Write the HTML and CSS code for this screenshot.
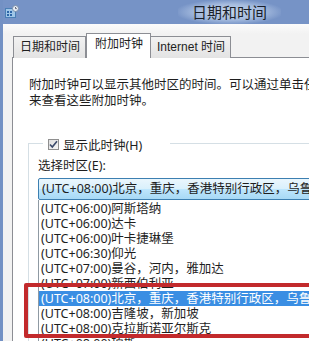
FILE: index.html
```html
<!DOCTYPE html>
<html>
<head lang="zh">
    <meta charset="UTF-8">
    <title>日期和时间</title>
    <link rel="stylesheet" href="styles.css">
</head>
<body>
<div class="window">
    <div class="titleBar">
        <svg class="appIcon" width="14" height="13" viewBox="0 0 14 13">
            <rect x="0.5" y="3.5" width="10" height="9" fill="#9fc6e8" stroke="#4b7fb5"/>
            <rect x="2" y="6" width="2" height="2" fill="#2d66a8"/>
            <rect x="5" y="6" width="2" height="2" fill="#2d66a8"/>
            <rect x="2" y="9" width="2" height="2" fill="#2d66a8"/>
            <rect x="5" y="9" width="2" height="2" fill="#2d66a8"/>
            <circle cx="10.5" cy="3.5" r="3" fill="#e8eef6" stroke="#7a8ea8"/>
            <path d="M10.5 2v1.6h1.3" stroke="#445" fill="none" stroke-width="0.8"/>
        </svg>
        <span class="title">日期和时间</span>
    </div>
    <div class="body">
        <ul class="tabGroup">
            <li class="tab">日期和时间</li>
            <li class="tab selectedTab">附加时钟</li>
            <li class="tab">Internet 时间</li>
        </ul>
        <div class="panel">
            <p class="intro">附加时钟可以显示其他时区的时间。可以通过单击任务栏时钟或悬停在其上<br>来查看这些附加时钟。</p>
            <div class="group">
                <label class="legend">
                    <span class="checkBox">
                        <svg width="9" height="9" viewBox="0 0 9 9">
                            <path d="M1 4.5l2.3 2.6L8 1.2" stroke="#3b4a6b" stroke-width="1.6" fill="none"/>
                        </svg>
                    </span>
                    显示此时钟(H)
                </label>
                <div class="groupBody">
                    <div class="fieldLabel">选择时区(E):</div>
                    <div class="comboBox">(UTC+08:00)北京，重庆，香港特别行政区，乌鲁木齐</div>
                    <ul class="dropList">
                        <li>(UTC+06:00)阿斯塔纳</li>
                        <li>(UTC+06:00)达卡</li>
                        <li>(UTC+06:00)叶卡捷琳堡</li>
                        <li>(UTC+06:30)仰光</li>
                        <li>(UTC+07:00)曼谷，河内，雅加达</li>
                        <li>(UTC+07:00)新西伯利亚</li>
                        <li class="selected">(UTC+08:00)北京，重庆，香港特别行政区，乌鲁木齐</li>
                        <li>(UTC+08:00)吉隆坡，新加坡</li>
                        <li>(UTC+08:00)克拉斯诺亚尔斯克</li>
                        <li>(UTC+08:00)珀斯</li>
                    </ul>
                </div>
            </div>
        </div>
    </div>
    <div class="redMark"></div>
</div>
</body>
</html>
```

FILE: styles.css
```css
*{
    margin: 0;
    padding: 0;
    box-sizing: border-box;
}
html,body{
    width: 309px;
    height: 341px;
    overflow: hidden;
}
body{
    font-family: "Noto Sans", "Noto Sans CJK SC", sans-serif;
    font-size: 12.5px;
    color: #1e1e1e;
    background: #f0f0f0;
}
.window{
    position: relative;
    height: 341px;
    border-left: 3px solid #7391c4;
    display: flex;
    flex-direction: column;
}
.titleBar{
    height: 24px;
    flex: none;
    display: flex;
    align-items: center;
    background: #7693c6;
    padding-left: 2px;
}
.appIcon{
    margin-top: -2px;
}
.title{
    margin-left: 159px;
    padding: 0 14px;
    font-size: 15px;
    line-height: 24px;
    white-space: nowrap;
    color: #1a1f2a;
    background: radial-gradient(ellipse at center, #c4d3ea 0%, #a6bcdf 45%, rgba(118,147,198,0) 75%);
}
.body{
    flex: 1;
    display: flex;
    flex-direction: column;
    background: linear-gradient(#fbfbfb, #f2f2f2 10px);
    padding-left: 9px;
}
ul{
    list-style: none;
}
.tabGroup{
    display: flex;
    align-items: flex-end;
    height: 34px;
    padding-left: 1px;
    position: relative;
    z-index: 1;
    margin-bottom: -1px;
}
.tabGroup .tab{
    height: 22px;
    line-height: 20px;
    padding: 0 5px 0 6px;
    font-family: "Liberation Sans", "Noto Sans CJK SC", sans-serif;
    font-size: 12px;
    background: linear-gradient(#f2f2f2, #e3e3e3);
    border: 1px solid #8c8e94;
    border-bottom: none;
    white-space: nowrap;
}
.tabGroup .tab + .tab{
    margin-left: -1px;
}
.tabGroup .tab.selectedTab{
    height: 25px;
    line-height: 20px;
    padding: 0 7px 0 8px;
    margin-left: 0;
    background: #fff;
}
.tabGroup .selectedTab + .tab{
    margin-left: 0;
    border-left: none;
}
.panel{
    flex: 1;
    background: #fff;
    border-top: 1px solid #8c8e94;
    border-left: 1px solid #8c8e94;
    padding: 19px 0 0 16px;
    overflow: hidden;
}
.intro{
    line-height: 16px;
    white-space: nowrap;
}
.group{
    margin-top: 34px;
    margin-left: -1px;
    border-top: 1px solid #d5dfe5;
    border-left: 1px solid #d5dfe5;
    padding-left: 9px;
}
.legend{
    display: flex;
    align-items: center;
    gap: 4px;
    width: 127px;
    height: 16px;
    margin: -8px 0 0 5px;
    padding-left: 5px;
    background: #fff;
}
.checkBox{
    width: 11px;
    height: 11px;
    border: 1px solid #8f8f8f;
    background: linear-gradient(135deg, #dedede, #f7f7f7);
    display: flex;
    align-items: center;
    justify-content: center;
}
.groupBody{
    padding-top: 6px;
}
.fieldLabel{
    line-height: 16px;
}
.comboBox{
    margin-top: 4px;
    height: 22px;
    width: 300px;
    line-height: 19px;
    padding-left: 3px;
    white-space: nowrap;
    overflow: hidden;
    border: 1px solid #3c7fb1;
    border-radius: 2px;
    background: linear-gradient(#eaf6fd, #d9f0fc 50%, #bee6fd 51%, #a7d9f5);
}
.dropList{
    border-left: 1px solid #8f9aa3;
    width: 300px;
    padding-top: 1px;
}
.dropList li{
    height: 15px;
    line-height: 15px;
    padding-left: 2px;
    white-space: nowrap;
}
.dropList li.selected{
    background: #3a8ee3;
    color: #fff;
}
.redMark{
    position: absolute;
    left: 21px;
    top: 283px;
    width: 300px;
    height: 55px;
    border: 4px solid #c22a2c;
    border-radius: 2px;
}
```
